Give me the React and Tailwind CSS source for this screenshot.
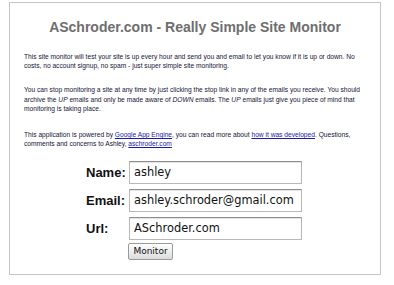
import React from "react";

export default function App() {
  const p = "text-[6.65px] leading-[9.2px] text-[#141438]";
  return (
    <div className="w-[394px] h-[285px] bg-white pt-[2px] pl-[9px]" style={{ fontFamily: '"Liberation Sans", Arial, sans-serif' }}>
      <div className="w-[372px] h-[273px] border border-[#c4c4c4] px-[14px] flex flex-col">
        <h1 className="pt-[16px] text-center text-[14px] leading-[16px] font-bold text-[#6e6e6e]">
          ASchroder.com - Really Simple Site Monitor
        </h1>
        <p className={`${p} mt-[17px]`}>
          This site monitor will test your site is up every hour and send you and email to let you know if it is up or down. No
          <br />
          costs, no account signup, no spam - just super simple site monitoring.
        </p>
        <p className={`${p} mt-[15px]`}>
          You can stop monitoring a site at any time by just clicking the stop link in any of the emails you receive. You should
          <br />
          archive the <i>UP</i> emails and only be made aware of <i>DOWN</i> emails. The <i>UP</i> emails just give you piece of mind that
          <br />
          monitoring is taking place.
        </p>
        <p className={`${p} mt-[17px]`}>
          This application is powered by <a className="text-[#1a1aa8] underline">Google App Engine</a>, you can read more about{" "}
          <a className="text-[#1a1aa8] underline">how it was developed</a>. Questions,
          <br />
          comments and concerns to Ashley, <a className="text-[#1a1aa8] underline">aschroder.com</a>
        </p>
        <div className="mt-[13px] ml-[62px] flex flex-col gap-[5px]">
          {[
            ["Name:", "ashley"],
            ["Email:", "ashley.schroder@gmail.com"],
            ["Url:", "ASchroder.com"],
          ].map(([label, value]) => (
            <div key={label} className="flex items-center">
              <div className="w-[43px] text-[13px] font-bold text-[#111]">{label}</div>
              <div
                className="w-[173px] h-[23px] border border-[#b8b8b8] border-t-[#8e8e8e] bg-white flex items-center pl-[4px] text-[11.4px] text-[#111] shadow-[inset_0_1px_1px_rgba(0,0,0,0.12)]"
                style={{ fontFamily: '"DejaVu Sans", Verdana, sans-serif' }}
              >
                {value}
              </div>
            </div>
          ))}
          <div className="flex -mt-[2px]">
            <div className="w-[42px]" />
            <button
              className="w-[45px] h-[17px] border border-[#9a9a9a] rounded-[2px] bg-gradient-to-b from-white to-[#dcdcdc] text-[9px] text-[#111] flex items-center justify-center"
              style={{ fontFamily: '"DejaVu Sans", Verdana, sans-serif' }}
            >
              Monitor
            </button>
          </div>
        </div>
      </div>
    </div>
  );
}
